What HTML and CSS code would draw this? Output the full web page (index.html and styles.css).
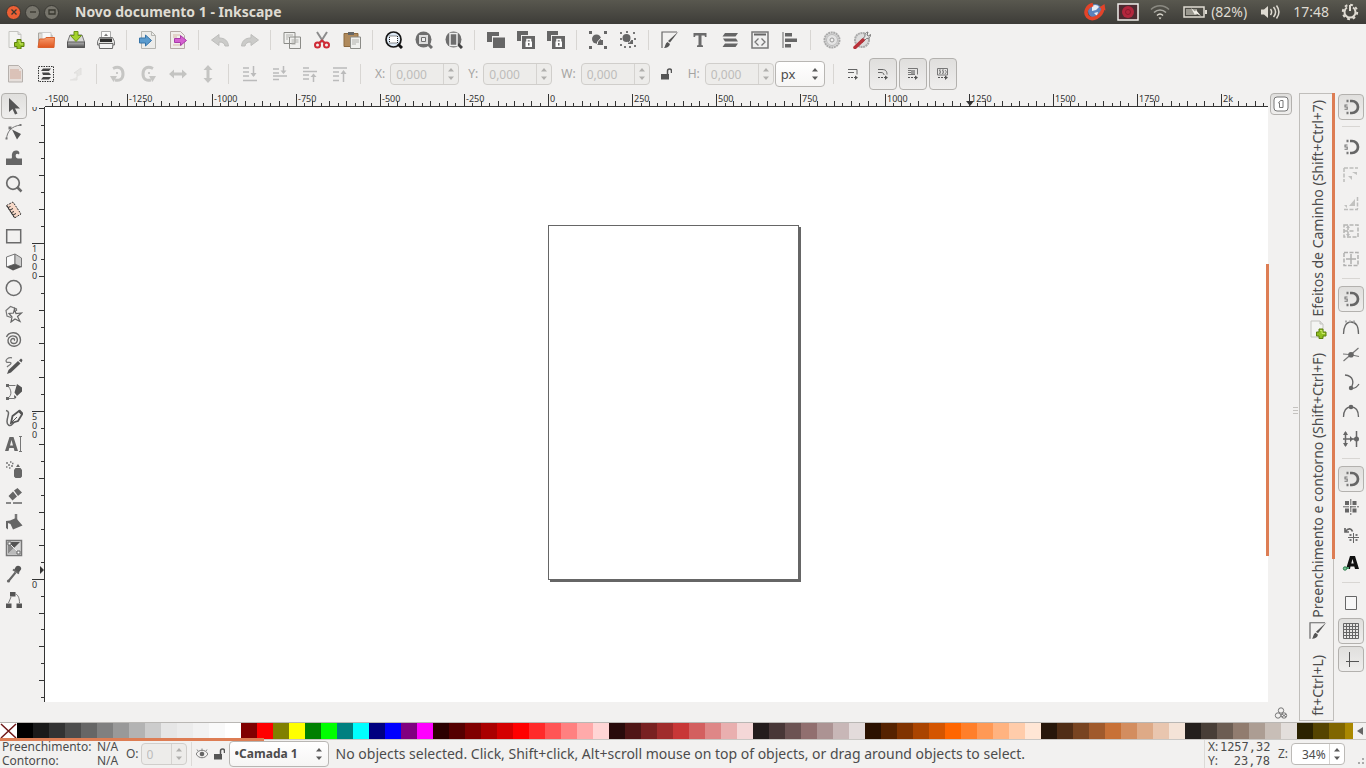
FILE: index.html
```html
<!DOCTYPE html>
<html lang="pt-BR">
<head>
<meta charset="utf-8">
<title>Novo documento 1 - Inkscape</title>
<link rel="stylesheet" href="styles.css">
</head>
<body>
<svg class="defs" aria-hidden="true">
  <defs>
    <linearGradient id="g-orange" x1="0" y1="0" x2="0" y2="1"><stop offset="0" stop-color="#f79a6b"/><stop offset="1" stop-color="#e0561f"/></linearGradient>
    <linearGradient id="g-metal" x1="0" y1="0" x2="0" y2="1"><stop offset="0" stop-color="#b9b9b9"/><stop offset="1" stop-color="#4c4c4c"/></linearGradient>
  </defs>
  <symbol id="spin" viewBox="0 0 8 14"><path d="M1 4.500 4 1l3 3.500zM1 9.500 4 13l3-3.500z"/></symbol>
  <symbol id="new" viewBox="0 0 18 18"><path d="M2 .5h9l3 3v13H2z" fill="#f4f4f2" stroke="#c4c4c0"/><path d="M11 .5v3h3" fill="#ddd" stroke="#c4c4c0"/><path d="M10 8.500h4v3h3v4h-3v2.500h-4v-2.500H7.500v-4H10z" fill="#8fbf1f" stroke="#5d7f10"/><path d="M11 10h2v3h3" fill="none" stroke="#cbe86b"/></symbol>
  <symbol id="open" viewBox="0 0 18 18"><path d="M1.500 16V2h5l1.500 2h7v12z" fill="#dcdad6" stroke="#a9a6a0"/><path d="M5 1.500h9V9H5z" fill="#f8f8f8" stroke="#ccc"/><path d="M1 16.500 2.500 8h5l1.500-1.500h8.500l-.5 10z" fill="url(#g-orange)" stroke="#d9602c"/></symbol>
  <symbol id="save" viewBox="0 0 18 18"><path d="M.5 11 3 4h12l2.500 7v5.500H.5z" fill="#d8d8d6" stroke="#777"/><path d="M.5 11h17v5.500H.5z" fill="url(#g-metal)" stroke="#555"/><path d="M7 .5h4v4h3.500L9 10.500 3.500 4.500H7z" fill="#a5d32c" stroke="#6b9416"/></symbol>
  <symbol id="print" viewBox="0 0 18 18"><path d="M4.500.5h9V9h-9z" fill="#fbfbfb" stroke="#aaa"/><path d="M7 5h4L9 2.500z" fill="#777"/><path d="M2.500 6.500h13l2 4v3.500H.5v-3.500z" fill="#e2e2e0" stroke="#777"/><path d="M3 7.500h12V11H3z" fill="#2e2e2e"/><path d="M2 12.500h14l-.5 5h-13z" fill="#f3f3f3" stroke="#666"/></symbol>
  <symbol id="import" viewBox="0 0 18 18"><path d="M2.500.5h10l4 4v13h-14z" fill="#ececea" stroke="#b5b5b0"/><path d="M12.500.5v4h4" fill="none" stroke="#b5b5b0"/><path d="M.5 7h6V4l6 5.500-6 5.500v-3H.5z" fill="#5a9bce" stroke="#3674a8"/></symbol>
  <symbol id="export" viewBox="0 0 18 18"><path d="M1.500.5h10l4 4v13h-14z" fill="#f0eeea" stroke="#b5a9a5"/><path d="M4 4h7M4 6h4M4 14h9" stroke="#d5b7a7"/><path d="M5.500 7.500h6V4.500l6 5-6 5v-3h-6z" fill="#d45fd0" stroke="#a93ba8"/></symbol>
  <symbol id="undo" viewBox="0 0 18 18"><path d="M.5 9 8 3.500V7c6 0 9 3 9.500 8h-3.500c-.5-3-2.500-4-6-4v3.500z" fill="#cbcbc9" stroke="#bdbdbb"/></symbol>
  <symbol id="copy" viewBox="0 0 18 18"><path d="M1 1.500h11v11H1zM6.500 6h11v11.500h-11z" fill="#f0f0ee" stroke="#8c8c88"/><path d="M3 4h7M3 6h3M3 8h2M8.500 9h7M8.500 11h7M8.500 13h4" stroke="#b0b0ac"/></symbol>
  <symbol id="cut" viewBox="0 0 18 18"><path d="M4 1l7 11M14 1 7 12" stroke="#8c8c8c" stroke-width="2" fill="none"/><circle cx="4.500" cy="14" r="2.500" fill="none" stroke="#cf2b36" stroke-width="2"/><circle cx="13.500" cy="14" r="2.500" fill="none" stroke="#cf2b36" stroke-width="2"/><path d="M6 12l3-2.500 3 2.500" stroke="#cf2b36" stroke-width="2" fill="none"/></symbol>
  <symbol id="paste" viewBox="0 0 18 18"><path d="M1 2.500h14v13H1z" fill="#b08a5c" stroke="#8c6a40"/><path d="M5 1h6v3H5z" fill="#666"/><path d="M7.500 6h10v11.500h-10z" fill="#f0f0ee" stroke="#8c8c88"/><path d="M9 9h7M9 11h7M9 13h4" stroke="#b0b0ac"/></symbol>
  <symbol id="zsel" viewBox="0 0 18 18"><circle cx="8.500" cy="8.500" r="7.500" fill="#dce8f4" stroke="#151515" stroke-width="1.700"/><path d="M13 13l4 4" stroke="#111" stroke-width="3"/><path d="M4.500 5h8v7h-8z" fill="#fff" stroke="#222" stroke-dasharray="1 1"/></symbol>
  <symbol id="zdraw" viewBox="0 0 18 18"><circle cx="8.500" cy="8.500" r="8" fill="#6e6e6e"/><path d="M13 13l4 4" stroke="#6e6e6e" stroke-width="3"/><path d="M4 4h9v9H4z" fill="#ddd"/><path d="M6.500 6.500h4v4h-4z" fill="#eee" stroke="#6e6e6e"/></symbol>
  <symbol id="zpage" viewBox="0 0 18 18"><circle cx="8.500" cy="8.500" r="8" fill="#6e6e6e"/><path d="M13 13l4 4" stroke="#444" stroke-width="3"/><path d="M5 2.500h7v12H5z" fill="#6e6e6e" stroke="#eee" stroke-width="1.500"/></symbol>
  <symbol id="dup" viewBox="0 0 18 18"><path d="M0 1h12v4H5v6H0zM6 6.500h12V17H6z" fill="#666"/></symbol>
  <symbol id="clone" viewBox="0 0 18 18"><path d="M0 0h11v4H4v6H0z" fill="#666"/><path d="M5 5h13v13H5z" fill="#666"/><path d="M8.500 10.500h6.500v5.500H8.500z" fill="#fff"/><path d="M10 11V8.500h3.500V11" fill="none" stroke="#fff" stroke-width="1.500"/><path d="M11 12h1.500v2.500H11z" fill="#666"/></symbol>
  <symbol id="group" viewBox="0 0 18 18"><path d="M0 0h3v3H0zM15 0h3v3h-3zM0 15h3v3H0zM15 15h3v3h-3z" fill="#666"/><circle cx="7.500" cy="8" r="4.500" fill="#666"/><path d="M9 9h5v5H9l-1.500-1.500z" fill="#666"/><path d="M8.500 13V11l3.500-4" stroke="#f2f1f0" fill="none"/></symbol>
  <symbol id="ungroup" viewBox="0 0 18 18"><path d="M1 1h2v2H1zM7 0h2v2H7zM14 1h2v2h-2zM1 7h2v2H1zM1 13h2v2H1zM5 15h2v2H5zM10 15h2v2h-2zM15 14h2v2h-2zM15 7h2v2h-2z" fill="#777"/><circle cx="7.500" cy="7" r="4" fill="#666"/><path d="M9 9h5v4H9z" fill="#666"/><path d="M9.500 12 12 9" stroke="#eee"/></symbol>
  <symbol id="fill" viewBox="0 0 18 18"><path d="M1 17V1h15" fill="none" stroke="#666" stroke-width="1.200"/><path d="M17.500.5 9 11.500l-2-1.500z" fill="#555"/><path d="M6.500 11 9 13c-.5 2.500-3 4-6 4 1.500-1.500 1-4.500 3.500-6z" fill="#555"/></symbol>
  <symbol id="text" viewBox="0 0 18 18"><path d="M2.500 2h13v4h-1.500l-.5-1.500h-3V14l1.500.5V16h-6v-1.500l1.500-.5V4.500h-3L4 6H2.500z" fill="#6b6b6b"/></symbol>
  <symbol id="layers" viewBox="0 0 18 18"><path d="M4 2h13l-2.500 3.500H1.500zM2 7.500h13l2 3H4zM4 12.500h13L14.500 16H1.500z" fill="#666"/></symbol>
  <symbol id="xml" viewBox="0 0 18 18"><path d="M1 1h16v16H1z" fill="#f0f0f0" stroke="#777" stroke-width="1.500"/><path d="M3 3.500h12" stroke="#666" stroke-width="2"/><path d="M7.500 7.500 4 11l3.500 3.500M10.500 7.500 14 11l-3.500 3.500" fill="none" stroke="#777" stroke-width="1.300"/></symbol>
  <symbol id="align" viewBox="0 0 18 18"><path d="M2 1v16" stroke="#666"/><path d="M4 2h7v3.500H4zM4 7.500h12V11H4zM4 13h6v3.500H4z" fill="#666"/></symbol>
  <symbol id="gear" viewBox="0 0 18 18"><circle cx="9" cy="9" r="7.500" fill="#ddd" stroke="#aaa" stroke-width="2" stroke-dasharray="2 .6"/><circle cx="9" cy="9" r="5.500" fill="#e4e4e4" stroke="#bbb"/><circle cx="9" cy="9" r="2" fill="#f2f1f0" stroke="#999"/></symbol>
  <symbol id="prefs" viewBox="0 0 18 18"><circle cx="9" cy="9" r="7" fill="#ddd" stroke="#aaa" stroke-width="2" stroke-dasharray="2 .6"/><path d="M7 10 12 5.500c-.5-2.500.5-4 3-4.500l-1 3 1.500 1 2-1.500c0 3-1.500 4-4 4L9 12z" fill="#e6e6e6" stroke="#777"/><path d="M2 16.500 10 9" stroke="#b8323a" stroke-width="3.500" stroke-linecap="round"/></symbol>

  <symbol id="selall" viewBox="0 0 18 18"><path d="M1.500.5h10l4 4v12.500h-14z" fill="#e6dfdb" stroke="#b5b0ac"/><path d="M3 5h9M3 7h11M3 9h11M3 11h11M3 13h11" stroke="#cfa595"/></symbol>
  <symbol id="sellay" viewBox="0 0 18 18"><path d="M1.500 1.500h15v15h-15z" fill="none" stroke="#333" stroke-dasharray="1.500 1"/><path d="M6 3.500h8l-2 2.500H4zM5 7.500h7l2 2.500H6zM6 12h8l-2 2.500H4z" fill="#444"/></symbol>
  <symbol id="desel" viewBox="0 0 18 18"><path d="M3 15h7V8H7l7-5v7" fill="#e6e5e3" stroke="#e0dfdd"/></symbol>
  <symbol id="rot" viewBox="0 0 18 18"><path d="M4 3.500c6-3 10 0 10 5.500s-4 7-8 6" fill="none" stroke="#c6c6c4" stroke-width="3"/><path d="M1 11h7l-3.500 6z" fill="#c6c6c4"/><circle cx="8" cy="8" r="1" fill="#bbb"/></symbol>
  <symbol id="fliph" viewBox="0 0 18 18"><path d="M0 9l5-4.500V7.500h8V4.500L18 9l-5 4.500v-3H5v3z" fill="#c4c4c2"/></symbol>
  <symbol id="lower" viewBox="0 0 18 18"><path d="M2 3h6M2 7h6M2 11h6M2 15.500h14M12.500 1v10" stroke="#bbb" stroke-width="1.500"/><path d="M9.500 8h6l-3 4z" fill="#bbb"/></symbol>
  <symbol id="lower1" viewBox="0 0 18 18"><path d="M2 4h6M2 8h6M2 11h14M2 14.500h6M12.500 1v6" stroke="#bbb" stroke-width="1.500"/><path d="M9.500 5.500h6l-3 3.500z" fill="#bbb"/></symbol>
  <symbol id="raise1" viewBox="0 0 18 18"><path d="M2 3h6M2 6.500h14M2 10h6M2 14h6M12.500 11v6" stroke="#bbb" stroke-width="1.500"/><path d="M9.500 12h6l-3-3.500z" fill="#bbb"/></symbol>
  <symbol id="raise" viewBox="0 0 18 18"><path d="M2 3h14M2 7h6M2 11h6M2 15.500h6M12.500 7v10" stroke="#bbb" stroke-width="1.500"/><path d="M9.500 9h6l-3-4z" fill="#bbb"/></symbol>
  <symbol id="lock" viewBox="0 0 12 12"><path d="M1 6h8v5.500H1z" fill="#555"/><path d="M7.500 6V3a2 2 0 0 1 4 0v2" fill="none" stroke="#555" stroke-width="1.500"/></symbol>
  <symbol id="aff1" viewBox="0 0 14 14"><path d="M2 2.500h9v5M2 5.500h6" fill="none" stroke="#666"/><path d="M2 10.500h8" stroke="#555" stroke-dasharray="2 1"/><path d="M9 8.500l3 2-3 2.500z" fill="#555"/></symbol>
  <symbol id="aff2" viewBox="0 0 14 14"><path d="M2 2.500h4c4 0 5 2 5 5M2 5.500h3c2 0 3 1 3 2.500" fill="none" stroke="#666"/><path d="M2 10.500h8" stroke="#555" stroke-dasharray="2 1"/><path d="M9 8.500l3 2-3 2.500z" fill="#555"/></symbol>
  <symbol id="aff3" viewBox="0 0 14 14"><path d="M2 1.500h9.500v6M2 3.500h7M2 5.500h7M2 7.500h7" fill="none" stroke="#777"/><path d="M5 3h4v4H5z" fill="#999"/><path d="M2 10.500h8" stroke="#555" stroke-dasharray="2 1"/><path d="M9 8.500l3 2-3 2.500z" fill="#555"/></symbol>
  <symbol id="aff4" viewBox="0 0 14 14"><path d="M1.500 1.500h10v6.500h-10z" fill="none" stroke="#777"/><path d="M3 3l2 2-2 2M6 3l2 2-2 2M9 3l1.500 2L9 7M4 2v5M7 2v5" fill="none" stroke="#888"/><path d="M2 10.500h8" stroke="#555" stroke-dasharray="2 1"/><path d="M9 8.500l3 2-3 2.500z" fill="#555"/></symbol>

  <symbol id="t-sel" viewBox="0 0 18 18"><path d="M4 1v14l3.500-3L10 17.500l2.500-1-2.500-5h5z" fill="#555"/></symbol>
  <symbol id="t-node" viewBox="0 0 18 18"><path d="M1.500 16C2 9 6 3 16 2" fill="none" stroke="#777"/><path d="M14.500 1h2v2h-2zM.5 14.500h2v2h-2zM3.500 3.500h3V6.500h-3z" fill="#777"/><path d="M7 6.500 16 11l-4 5.500z" fill="#555"/></symbol>
  <symbol id="t-tweak" viewBox="0 0 18 18"><path d="M1 9.500h5.500c1-1.500 0-3 .5-4.500C7.500 2 10 1 12 1.500c2 .5 3 2 2 4-1.500-1.500-3.500-1-3.300 1.500.1 1.500 1 2.500 2.300 2.500h4V16H1z" fill="#666"/></symbol>
  <symbol id="t-zoom" viewBox="0 0 18 18"><circle cx="8" cy="8" r="6.300" fill="none" stroke="#6b6b6b" stroke-width="1.700"/><path d="M12 12l4.500 4.500" stroke="#6b6b6b" stroke-width="2.500"/></symbol>
  <symbol id="t-meas" viewBox="0 0 18 18"><path d="M1.500 4.500 8 1l8 12-6.500 4z" fill="#f8d9c8" stroke="#333" stroke-dasharray="2 1"/><path d="M2 5l7.500 11.500M3 6.500l2.500-1M5 9l3-1.500M6.500 11.500l2.500-1M8 14l3-1.500" stroke="#333" fill="none"/></symbol>
  <symbol id="t-rect" viewBox="0 0 18 18"><path d="M1.700 2.700h14v13h-14z" fill="none" stroke="#6b6b6b" stroke-width="1.500"/></symbol>
  <symbol id="t-cube" viewBox="0 0 18 18"><path d="M1.500 4 10 1v10l-8.500 3z" fill="#fafafa" stroke="#777"/><path d="M10 1l6.500 4v9L10 11z" fill="#ccc" stroke="#777"/><path d="M1.500 14 10 11l6.500 3L8 17.500z" fill="#555"/></symbol>
  <symbol id="t-circ" viewBox="0 0 18 18"><circle cx="8.700" cy="9" r="7.500" fill="none" stroke="#6b6b6b" stroke-width="1.500"/></symbol>
  <symbol id="t-star" viewBox="0 0 18 18"><path d="M6 12.500 2 11 1 5.500 5.500 1.500l6 2.500v2" fill="none" stroke="#777" stroke-width="1.200"/><path d="M9.500 4l1.500 4.500 5.500-.5-4 3.500 2.500 5-5-2.500-4 3 1-5L4 8.500l4.500-.5z" fill="#f2f1f0" stroke="#666" stroke-width="1.200"/></symbol>
  <symbol id="t-spiral" viewBox="0 0 18 18"><path d="M9 9.500c1-.5.5-2-1-2-2 0-2.500 2-2 3.500 1 2 4 2 5.500.500 1.500-2 1-5-1-6C7 4 3.500 5.500 3 9c-.5 4 3 6.500 6.500 6.300 3.500-.3 6-3 6-6.300 0-4-3-7.500-7.500-7.200C5 2 2.500 3.500 1.500 6" fill="none" stroke="#6b6b6b" stroke-width="1.400"/></symbol>
  <symbol id="t-pencil" viewBox="0 0 18 18"><path d="M7 .8C3 0 0 3 1.500 5c1 1 4-.5 4.500 1 .5 1.500-2.500 2.500-4 4" fill="none" stroke="#777" stroke-width="1.200"/><path d="M2 17l1.500-4L13 4l2.500 2.500L6 15.500z" fill="#555"/><path d="M14 3.500 16 1.500l1.500 1.500-1 2.500z" fill="#555"/></symbol>
  <symbol id="t-bez" viewBox="0 0 18 18"><path d="M2.500 2.500h8M2.500 2.500C6 6 8 12 2.500 15.500H9" fill="none" stroke="#777"/><path d="M1 1h3v3H1zM1 14h3v3H1z" fill="#666"/><path d="M12 1l5 3.500v4L12 13 9.500 9.500zM9 12l2.500 2-2 2.500z" fill="#555"/></symbol>
  <symbol id="t-call" viewBox="0 0 18 18"><path d="M1 1.500c5 1 1 6 1 11 0 4 3 5 5 3l2-2" fill="none" stroke="#666" stroke-width="1.500"/><path d="M6 14l1.500-7L14 2l3 3.500L13 12z" fill="none" stroke="#555" stroke-width="1.800"/><path d="M7 13l5-5" stroke="#555"/><path d="M14 1.500 17.500 5" stroke="#555" stroke-width="2.500"/></symbol>
  <symbol id="t-text" viewBox="0 0 18 18"><path d="M0 16 4.500 2h4L13 16H9.500l-.8-3H4.300l-.8 3zM5 10.500h3L6.500 5z" fill="#666"/><path d="M14 1.500h3M14 16.500h3M15.500 1.500v15" stroke="#777"/></symbol>
  <symbol id="t-spray" viewBox="0 0 18 18"><path d="M9 9l1.500-2h5L17 9v6.500l-1.500 1.500h-5L9 15.500zM11 6l2-3 2 3z" fill="#666"/><path d="M1 2h2M5 1h1.500M3 4h2M6 5h2M1 6h1.500M4 7h1.500M7 2.500h1.500" stroke="#777" stroke-width="1.500"/></symbol>
  <symbol id="t-erase" viewBox="0 0 18 18"><path d="M9 3.500 12.500 1 17 5.500 13 9zM8 4.500l4 5-4.500 4L3.500 9z" fill="#666"/><path d="M1 16h5M8 16h9" stroke="#666" stroke-width="1.300"/></symbol>
  <symbol id="t-bucket" viewBox="0 0 18 18"><path d="M11 1v8" stroke="#777" stroke-width="2.500"/><path d="M5 7.500 11 5l6.500 7.500L8 16.500 5.500 11 3 10v6.500L1 15V8z" fill="#666"/></symbol>
  <symbol id="t-grad" viewBox="0 0 18 18"><path d="M1.500 1.500h15v15h-15z" fill="#ddd" stroke="#777" stroke-width="1.500"/><path d="M3 3v12L9 9z" fill="#888"/><path d="M3 3h12L9 9z" fill="#555"/><path d="M3 15h12L9 9z" fill="#bbb"/><path d="M3 3l12 12" stroke="#eee"/><path d="M3 3h3v3H3zM12 12h3v3h-3z" fill="#fff" stroke="#666"/></symbol>
  <symbol id="t-drop" viewBox="0 0 18 18"><path d="M11 1.500c2.500-2 6 .5 5 3l-2.500 3.500L9 5z" fill="#555"/><path d="M8 4.500l6 4M10.500 7.500 4 15.500" stroke="#666" stroke-width="2"/><circle cx="3.500" cy="16" r="1.600" fill="#666"/></symbol>
  <symbol id="t-conn" viewBox="0 0 18 18"><path d="M5 1h5.500v4.500H5zM1 12.500h5.500V17H1zM11.500 12.500H17V17h-5.500z" fill="#555"/><path d="M6 6 3.500 12M10.500 3c3 1 4 5 4 9" fill="none" stroke="#777"/></symbol>

  <symbol id="snap" viewBox="0 0 18 18"><path d="M8 3h2a6 6 0 0 1 0 12H8" fill="none" stroke="#666" stroke-width="2.700"/><path d="M4.500 1.700h2v2.600h-2zM4.500 13.700h2v2.600h-2z" fill="#777"/><path d="M5.500 7H3v2h2.200v2.200H2.500" fill="none" stroke="#777" stroke-width="1.100"/></symbol>
  <symbol id="s-bb" viewBox="0 0 18 18"><path d="M2 2h14M2 2v14" stroke="#bdbdbb" stroke-width="1.500" stroke-dasharray="4 1.500"/><path d="M10 6h5v3zM6 10h4v4z" fill="#c2c2c0"/></symbol>
  <symbol id="s-edge" viewBox="0 0 18 18"><path d="M2 15.500h14M15.500 3v12" stroke="#bdbdbb" stroke-width="1.500" stroke-dasharray="4 1.500"/><path d="M7 12h6V5zM2 11h3v3z" fill="#c2c2c0"/></symbol>
  <symbol id="s-mid" viewBox="0 0 18 18"><path d="M2 3h14v12H2zM2 9h11M6 4v10" fill="none" stroke="#b5b5b3" stroke-width="1.500" stroke-dasharray="4 1.500"/><path d="M4 6l2-3 2 3zM4 12l2 3 2-3z" fill="#bbb"/></symbol>
  <symbol id="s-cen" viewBox="0 0 18 18"><path d="M2 2.500h14v13H2z" fill="none" stroke="#b0b0ae" stroke-width="1.500" stroke-dasharray="4 1.500"/><path d="M9 4v10M4 9h10" stroke="#b0b0ae" stroke-width="1.500"/></symbol>
  <symbol id="s-node" viewBox="0 0 18 18"><path d="M1.500 16C1.500 9 4 4 9 4s7.500 5 7.500 12" fill="none" stroke="#666" stroke-width="1.300"/><path d="M3 3.500h12" stroke="#aaa" stroke-width="2" stroke-dasharray="2 2"/></symbol>
  <symbol id="s-path" viewBox="0 0 18 18"><path d="M1.500 15 16.500 2M1 8c6 0 10 1 16 2.500" fill="none" stroke="#777" stroke-width="1.200"/><circle cx="9" cy="8.700" r="2.800" fill="#666"/></symbol>
  <symbol id="s-cusp" viewBox="0 0 18 18"><path d="M3 1c9 1 9 8 6 13 3 1 6-1 8-4" fill="none" stroke="#666" stroke-width="1.300"/><circle cx="9" cy="14" r="2.200" fill="#666"/></symbol>
  <symbol id="s-smooth" viewBox="0 0 18 18"><path d="M1.500 15C1.500 9 4 5 9 5s7.500 4 7.500 10" fill="none" stroke="#666" stroke-width="1.300"/><circle cx="9" cy="5" r="2.300" fill="#666"/></symbol>
  <symbol id="s-line" viewBox="0 0 18 18"><path d="M3.500 2v14M1 9h15M14.500 1v16" stroke="#666" stroke-width="1.500"/><path d="M1 5l2.500-4L6 5zM1 13l2.500 4L6 13zM8 6l3 3-3 3z" fill="#666"/><circle cx="14.500" cy="9" r="2.500" fill="#666"/></symbol>
  <symbol id="s-obj" viewBox="0 0 18 18"><path d="M3 3h4v4H3zM10.500 3h4v4h-4zM3 10.500h4v4H3zM10.500 10.500h4v4h-4z" fill="#666"/><path d="M8.800 1v16M1 8.800h16" stroke="#666" stroke-dasharray="6 1"/></symbol>
  <symbol id="s-rot" viewBox="0 0 18 18"><path d="M3 2v4h4M3.500 5.500c3-4 6-3 7 0" fill="none" stroke="#666" stroke-width="1.700"/><path d="M6 11.500h11M11.500 7v10" stroke="#666"/><path d="M7.500 8h2v2h-2zM13.500 8h2v2h-2zM7.500 13h2v2h-2zM13.500 13h2v2h-2z" fill="#777"/></symbol>
  <symbol id="s-text" viewBox="0 0 18 18"><path d="M4 15 8 2h5l4 13h-4l-.7-2.500H8.500L8 15zM9.300 9.500h2.400L10.500 5z" fill="#111"/><path d="M2 14h5" stroke="#4b9b6b" stroke-width="2"/><circle cx="3" cy="14.500" r="1.700" fill="#7dc79a" stroke="#2c7a4b"/></symbol>
  <symbol id="s-page" viewBox="0 0 18 18"><path d="M3.500 2.500h11v13h-11z" fill="#f7f7f7" stroke="#666"/></symbol>
  <symbol id="s-grid" viewBox="0 0 18 18"><path d="M1.500 1.500h15v15h-15zM4.500 1v16M7.500 1v16M10.500 1v16M13.500 1v16M1 4.500h16M1 7.500h16M1 10.500h16M1 13.500h16" fill="none" stroke="#666"/></symbol>
  <symbol id="s-guide" viewBox="0 0 18 18"><path d="M7.500 2v15M4 11.500h13" stroke="#555"/></symbol>
</svg>

<header class="titlebar">
  <div class="wm">
    <button class="wm-btn wm-close" aria-label="Fechar"><svg viewBox="0 0 14 14"><path d="M4.500 4.500l5 5M9.500 4.500l-5 5"/></svg></button>
    <button class="wm-btn" aria-label="Minimizar"><svg viewBox="0 0 14 14"><path d="M4 7h6"/></svg></button>
    <button class="wm-btn" aria-label="Maximizar"><svg viewBox="0 0 14 14"><path d="M4 5h6v4H4z"/></svg></button>
  </div>
  <h1>Novo documento 1 - Inkscape</h1>
  <div class="tray">
    <svg class="tray-globe" viewBox="0 0 22 20"><circle cx="11" cy="9" r="7" fill="#5c83bd"/><path d="M8 4c3-2 6-1 7 1l-3 3-4 1zM10 11l4-1-1 4z" fill="#e6edf5"/><path d="M9 2.500C3 4 0 10 3.500 14.500c5 5 14 0 15.500-8" fill="none" stroke="#e2442a" stroke-width="3.500"/><path d="M15 5.500 20.500 2l1 6.500z" fill="#e2442a"/></svg>
    <svg class="tray-rec" viewBox="0 0 22 18"><path d="M1 1h20v16H1z" fill="#4c2a30" stroke="#f0eeea" stroke-width="1.500"/><circle cx="11" cy="9" r="6" fill="#b3263d"/><circle cx="11" cy="9" r="2.500" fill="none" stroke="#8d1a2e"/></svg>
    <svg class="tray-wifi" viewBox="0 0 20 16"><path d="M1 5.500c5-5 13-5 18 0" stroke="#8b8a82"/><path d="M4 8.500c3.500-3.500 8.500-3.500 12 0" stroke="#aaa9a2"/><path d="M7 11.500c2-2 4-2 6 0" stroke="#dfdbd2"/><path d="M8.500 13.500h3L10 15.500z" fill="#dfdbd2"/></svg>
    <svg class="tray-bat" viewBox="0 0 24 14"><path d="M1 2h20v10H1z" fill="none" stroke="#dfdbd2" stroke-width="1.500"/><path d="M22 5h2v4h-2z" fill="#dfdbd2"/><path d="M3 4h11v6H3z" fill="#9a988f"/><path d="M8 3l4 3.500 1-1.500 5 6-5-2.500-1 1.500z" fill="#f2efe8"/></svg>
    <span class="tray-pct">(82%)</span>
    <svg class="tray-vol" viewBox="0 0 20 16"><path d="M1 5.500h3L8 2v12l-4-3.500H1z" fill="#dfdbd2"/><path d="M10.500 5c1.500 2 1.500 4 0 6M13.500 3c2.500 3 2.500 7 0 10M16.500 1.500c3 4 3 9 0 13" fill="none" stroke="#dfdbd2" stroke-width="1.500"/></svg>
    <span class="tray-time">17:48</span>
    <svg class="tray-pow" viewBox="0 0 18 18"><circle cx="9" cy="9" r="7.200" fill="none" stroke="#dfdbd2" stroke-width="2" stroke-dasharray="2.800 2.850"/><path d="M6 4.500a5.500 5.500 0 1 0 6 0M9 2v6" fill="none" stroke="#dfdbd2" stroke-width="2"/></svg>
  </div>
</header>

<nav class="bar commands" aria-label="Comandos">
  <button aria-label="Novo"><svg><use href="#new"/></svg></button>
  <button aria-label="Abrir"><svg><use href="#open"/></svg></button>
  <button aria-label="Salvar"><svg><use href="#save"/></svg></button>
  <button aria-label="Imprimir"><svg><use href="#print"/></svg></button>
  <i class="sep"></i>
  <button aria-label="Importar"><svg><use href="#import"/></svg></button>
  <button aria-label="Exportar"><svg><use href="#export"/></svg></button>
  <i class="sep"></i>
  <button aria-label="Desfazer"><svg><use href="#undo"/></svg></button>
  <button aria-label="Refazer"><svg class="mirror"><use href="#undo"/></svg></button>
  <i class="sep"></i>
  <button aria-label="Copiar"><svg><use href="#copy"/></svg></button>
  <button aria-label="Recortar"><svg><use href="#cut"/></svg></button>
  <button aria-label="Colar"><svg><use href="#paste"/></svg></button>
  <i class="sep"></i>
  <button aria-label="Ajustar seleção"><svg><use href="#zsel"/></svg></button>
  <button aria-label="Ajustar desenho"><svg><use href="#zdraw"/></svg></button>
  <button aria-label="Ajustar página"><svg><use href="#zpage"/></svg></button>
  <i class="sep"></i>
  <button aria-label="Duplicar"><svg><use href="#dup"/></svg></button>
  <button aria-label="Clonar"><svg><use href="#clone"/></svg></button>
  <button aria-label="Desligar clone"><svg><use href="#clone"/></svg></button>
  <i class="sep"></i>
  <button aria-label="Agrupar"><svg><use href="#group"/></svg></button>
  <button aria-label="Desagrupar"><svg><use href="#ungroup"/></svg></button>
  <i class="sep"></i>
  <button aria-label="Preenchimento e contorno"><svg><use href="#fill"/></svg></button>
  <button aria-label="Texto e fonte"><svg><use href="#text"/></svg></button>
  <button aria-label="Camadas"><svg><use href="#layers"/></svg></button>
  <button aria-label="Editor XML"><svg><use href="#xml"/></svg></button>
  <button aria-label="Alinhar"><svg><use href="#align"/></svg></button>
  <i class="sep"></i>
  <button aria-label="Preferências"><svg><use href="#gear"/></svg></button>
  <button aria-label="Propriedades do documento"><svg><use href="#prefs"/></svg></button>
</nav>

<div class="bar options">
  <button aria-label="Selecionar tudo"><svg><use href="#selall"/></svg></button>
  <button aria-label="Selecionar em todas as camadas"><svg><use href="#sellay"/></svg></button>
  <button aria-label="Desfazer seleção"><svg><use href="#desel"/></svg></button>
  <i class="sep"></i>
  <button aria-label="Girar à esquerda"><svg><use href="#rot"/></svg></button>
  <button aria-label="Girar à direita"><svg class="mirror"><use href="#rot"/></svg></button>
  <button aria-label="Inverter horizontalmente"><svg><use href="#fliph"/></svg></button>
  <button aria-label="Inverter verticalmente"><svg class="quarter"><use href="#fliph"/></svg></button>
  <i class="sep"></i>
  <button aria-label="Mover para o fundo"><svg><use href="#lower"/></svg></button>
  <button aria-label="Abaixar"><svg><use href="#lower1"/></svg></button>
  <button aria-label="Elevar"><svg><use href="#raise1"/></svg></button>
  <button aria-label="Mover para o topo"><svg><use href="#raise"/></svg></button>
  <i class="sep"></i>
  <div class="coords">
    <label for="cx">X:</label><span class="spin off"><input id="cx" value="0,000" disabled><svg><use href="#spin"/></svg></span>
    <label for="cy">Y:</label><span class="spin off"><input id="cy" value="0,000" disabled><svg><use href="#spin"/></svg></span>
    <label for="cw">W:</label><span class="spin off"><input id="cw" value="0,000" disabled><svg><use href="#spin"/></svg></span>
    <button class="mini" aria-label="Travar proporção"><svg><use href="#lock"/></svg></button>
    <label for="ch">H:</label><span class="spin off"><input id="ch" value="0,000" disabled><svg><use href="#spin"/></svg></span>
  </div>
  <span class="combo unit"><select aria-label="Unidade"><option>px</option></select><svg><use href="#spin"/></svg></span>
  <i class="sep"></i>
  <button class="aff" aria-label="Escalar contorno"><svg><use href="#aff1"/></svg></button>
  <button class="aff on" aria-label="Escalar cantos"><svg><use href="#aff2"/></svg></button>
  <button class="aff on" aria-label="Mover gradientes"><svg><use href="#aff3"/></svg></button>
  <button class="aff on" aria-label="Mover padrões"><svg><use href="#aff4"/></svg></button>
</div>

<main class="work">
  <nav class="tools" aria-label="Ferramentas">
    <button class="on" aria-label="Seleção"><svg><use href="#t-sel"/></svg></button>
    <button aria-label="Nós"><svg><use href="#t-node"/></svg></button>
    <button aria-label="Ajuste"><svg><use href="#t-tweak"/></svg></button>
    <button aria-label="Zoom"><svg><use href="#t-zoom"/></svg></button>
    <button aria-label="Medição"><svg><use href="#t-meas"/></svg></button>
    <button aria-label="Retângulo"><svg><use href="#t-rect"/></svg></button>
    <button aria-label="Caixa 3D"><svg><use href="#t-cube"/></svg></button>
    <button aria-label="Elipse"><svg><use href="#t-circ"/></svg></button>
    <button aria-label="Estrela"><svg><use href="#t-star"/></svg></button>
    <button aria-label="Espiral"><svg><use href="#t-spiral"/></svg></button>
    <button aria-label="Lápis"><svg><use href="#t-pencil"/></svg></button>
    <button aria-label="Bézier"><svg><use href="#t-bez"/></svg></button>
    <button aria-label="Caligrafia"><svg><use href="#t-call"/></svg></button>
    <button aria-label="Texto"><svg><use href="#t-text"/></svg></button>
    <button aria-label="Spray"><svg><use href="#t-spray"/></svg></button>
    <button aria-label="Borracha"><svg><use href="#t-erase"/></svg></button>
    <button aria-label="Balde"><svg><use href="#t-bucket"/></svg></button>
    <button aria-label="Gradiente"><svg><use href="#t-grad"/></svg></button>
    <button aria-label="Conta-gotas"><svg><use href="#t-drop"/></svg></button>
    <button aria-label="Conector"><svg><use href="#t-conn"/></svg></button>
  </nav>
  <svg class="ruler-v" id="rv"></svg>
  <div class="desk">
    <svg class="ruler-h" id="rh"></svg>
    <div class="canvas"><div class="page"></div><i class="thumb-v"></i></div>
    <div class="desk-foot"></div>
  </div>
  <div class="gutter">
    <button class="on guide" aria-label="Guias"><svg viewBox="0 0 18 18"><rect x="2" y="2" width="14" height="14" rx="3" fill="#fff" stroke="#777"/><path d="M7.500 12.500V8H6.500l2-2.500H11v7z" fill="#fff" stroke="#777"/></svg></button>
    <i class="grip"></i>
    <svg class="cms" viewBox="0 0 14 14"><circle cx="7" cy="4.500" r="2.700"/><circle cx="4" cy="9.500" r="2.700"/><circle cx="10" cy="9.500" r="2.700"/><path d="M8 8l4 3M12 8l-4 3"/></svg>
  </div>
  <aside class="dock">
    <button class="tab"><svg><use href="#new"/></svg>Efeitos de Caminho (Shift+Ctrl+7)</button>
    <button class="tab"><svg><use href="#fill"/></svg>Preenchimento e contorno (Shift+Ctrl+F)</button>
    <button class="tab">ft+Ctrl+L)</button>
  </aside>
  <nav class="snaps" aria-label="Encaixe">
    <i class="thumb-d"></i>
    <button class="on" aria-label="Ativar encaixe"><svg><use href="#snap"/></svg></button>
    <i class="hsep"></i>
    <button aria-label="Caixas"><svg><use href="#snap"/></svg></button>
    <button aria-label="Bordas"><svg><use href="#s-bb"/></svg></button>
    <button aria-label="Cantos"><svg><use href="#s-edge"/></svg></button>
    <button aria-label="Pontos médios"><svg><use href="#s-mid"/></svg></button>
    <button aria-label="Centros"><svg><use href="#s-cen"/></svg></button>
    <i class="hsep"></i>
    <button class="on" aria-label="Nós"><svg><use href="#snap"/></svg></button>
    <button aria-label="Caminhos"><svg><use href="#s-node"/></svg></button>
    <button aria-label="Interseções"><svg><use href="#s-path"/></svg></button>
    <button aria-label="Nós de canto"><svg><use href="#s-cusp"/></svg></button>
    <button aria-label="Nós suaves"><svg><use href="#s-smooth"/></svg></button>
    <button aria-label="Meio de linha"><svg><use href="#s-line"/></svg></button>
    <i class="hsep"></i>
    <button class="on" aria-label="Outros"><svg><use href="#snap"/></svg></button>
    <button aria-label="Centro de objetos"><svg><use href="#s-obj"/></svg></button>
    <button aria-label="Centro de rotação"><svg><use href="#s-rot"/></svg></button>
    <button aria-label="Linha de base"><svg><use href="#s-text"/></svg></button>
    <i class="hsep"></i>
    <button aria-label="Borda da página"><svg><use href="#s-page"/></svg></button>
    <button class="on" aria-label="Grades"><svg><use href="#s-grid"/></svg></button>
    <button class="on" aria-label="Linhas-guia"><svg><use href="#s-guide"/></svg></button>
  </nav>
</main>

<div class="palette">
  <button class="none" aria-label="Nenhuma"><svg viewBox="0 0 17 16"><path d="M1 1l15 14M16 1 1 15"/></svg></button>
  <div class="swatches" id="sw"></div>
  <button class="pal-menu" aria-label="Paletas"><svg viewBox="0 0 6 8"><path d="M6 0v8L0 4z"/></svg></button>
  <i class="thumb-p"></i>
</div>

<footer class="status">
  <div class="style-ind"><span>Preenchimento:</span><span>N/A</span><span>Contorno:</span><span>N/A</span></div>
  <label for="op">O:</label>
  <span class="spin off opacity"><input id="op" value="0" disabled><svg><use href="#spin"/></svg></span>
  <i class="vsep"></i>
  <button class="eye" aria-label="Visibilidade"><svg viewBox="0 0 12 12"><path d="M0 6c3-5 9-5 12 0-3 5-9 5-12 0z" fill="none" stroke="#777"/><circle cx="6" cy="6" r="2.300" fill="#666"/><path d="M2 3 1 1.500M6 2V.5M10 3l1-1.500" stroke="#888"/></svg></button>
  <button class="mini" aria-label="Travar camada"><svg><use href="#lock"/></svg></button>
  <span class="combo layer"><select aria-label="Camada"><option>•Camada 1</option></select><svg><use href="#spin"/></svg></span>
  <p class="msg">No objects selected. Click, Shift+click, Alt+scroll mouse on top of objects, or drag around objects to select.</p>
  <div class="xy"><span>X:</span><b>1257,32</b><span>Y:</span><b>23,78</b></div>
  <label for="zm">Z:</label>
  <span class="spin zoom"><input id="zm" value="34%"><svg><use href="#spin"/></svg></span>
  <i class="corner"></i>
</footer>
<script src="app.js"></script>
</body>
</html>
```
FILE: styles.css
```css
* { box-sizing: border-box; }
html, body { height: 100%; }
body {
  margin: 0;
  display: flex;
  flex-direction: column;
  overflow: hidden;
  background: #f2f1f0;
  color: #4c4c4c;
  font: 13px/16px "Noto Sans", "Open Sans", sans-serif;
}
button {
  display: flex;
  align-items: center;
  justify-content: center;
  flex: none;
  padding: 0;
  border: 1px solid transparent;
  border-radius: 4px;
  background: none;
  color: inherit;
  font: inherit;
}
button svg { width: 18px; height: 18px; flex: none; }
button.on {
  border-color: #b3b1ae;
  background: linear-gradient(#e0dfdd, #efeeed);
}
.defs { position: absolute; width: 0; height: 0; }
.mirror { transform: scaleX(-1); }
.quarter { transform: rotate(90deg); }

.titlebar {
  display: flex;
  align-items: center;
  flex: none;
  height: 24px;
  padding: 0 7px 0 6px;
  background: linear-gradient(#59584f, #3d3c38);
  color: #dfdbd2;
}
.wm { display: flex; gap: 4px; width: 69px; }
.wm-btn {
  width: 15px;
  height: 15px;
  border: 1px solid #3a3934;
  border-radius: 50%;
  background: #77756c;
}
.wm-close { background: #ec5f34; }
.wm-btn svg { width: 14px; height: 14px; fill: none; stroke: #38372f; stroke-width: 1.300; }
.titlebar h1 { margin: 0; font-size: 14px; line-height: 24px; font-weight: 700; }
.tray { display: flex; align-items: center; margin-left: auto; font-size: 14px; line-height: 24px; }
.tray svg { flex: none; }
.tray-globe { width: 22px; height: 20px; margin-right: 11px; }
.tray-rec { width: 22px; height: 18px; margin-right: 11px; }
.tray-wifi { width: 20px; height: 16px; margin-right: 13px; fill: none; stroke-width: 1.500; }
.tray-bat { width: 24px; height: 14px; margin-right: 4px; }
.tray-pct { margin-right: 13px; }
.tray-vol { width: 20px; height: 16px; margin-right: 13px; }
.tray-time { margin-right: 12px; }
.tray-pow { width: 18px; height: 18px; }

.bar { display: flex; align-items: center; flex: none; padding-left: 1px; }
.bar > button { width: 30px; height: 30px; }
.commands { height: 32px; }
.options { height: 37px; padding-bottom: 1px; }
.sep { flex: none; width: 12px; height: 20px; }
.sep::before { content: ""; display: block; width: 1px; height: 100%; margin-left: 5px; background: #d8d6d3; }

.coords { display: flex; align-items: center; padding-left: 8px; color: #a5a4a2; font-size: 12px; }
.coords label { margin-right: 5px; }
.coords .spin { margin-right: 9px; }
.coords .mini { margin-right: 15px; }
.coords .spin:last-child { margin-right: 1px; }
.mini { width: 14px; height: 20px; }
.mini svg { width: 12px; height: 12px; }

.spin {
  display: flex;
  align-items: center;
  flex: none;
  width: 69px;
  height: 22px;
  border: 1px solid #bcbab7;
  border-radius: 4px;
  background: #fff;
}
.spin input {
  flex: 1;
  min-width: 0;
  height: 100%;
  padding: 0 0 0 5px;
  border: 0;
  border-right: 1px solid #d5d3d0;
  background: none;
  color: #4c4c4c;
  font: 12px/16px "Noto Sans", "Open Sans", sans-serif;
}
.spin svg, .combo svg { width: 8px; height: 14px; fill: #5a5a5a; }
.spin svg { margin: 0 3px; }
.spin.off { border-color: #d0cecb; background: #edecea; }
.spin.off input { color: #bdbcba; }
.spin.off svg { fill: #b0afad; }

.combo { position: relative; display: flex; flex: none; height: 26px; }
.combo select {
  appearance: none;
  width: 100%;
  height: 100%;
  padding: 0 5px;
  border: 1px solid #b8b6b3;
  border-radius: 4px;
  background: linear-gradient(#fff, #f6f5f4);
  color: #4c4c4c;
  font: 13px/16px "Noto Sans", "Open Sans", sans-serif;
}
.combo svg { position: absolute; right: 6px; top: 6px; pointer-events: none; }
.unit { width: 50px; margin-right: 3px; }
.options > .aff { width: 28px; height: 32px; margin-right: 2px; }
.options > .aff:not(.on) { margin: 0 2px 0 -1px; }
.aff svg { width: 14px; height: 14px; }

.work {
  display: grid;
  grid-template-columns: 28px 17px minmax(0, 1fr) 31px 35px 32px;
  grid-template-rows: minmax(0, 1fr);
  flex: 1;
  min-height: 0;
}
.tools { display: flex; flex-direction: column; padding-left: 1px; }
.tools button { width: 26px; height: 26px; }
.ruler-v { width: 17px; height: calc(100% - 34px); margin-top: 14px; overflow: hidden; }
.desk { display: flex; flex-direction: column; min-width: 0; }
.ruler-h { flex: none; width: 100%; height: 14px; }
.ruler-h text, .ruler-v text { font: 9px "Noto Sans", "Open Sans", sans-serif; fill: #333; }
.tick { fill: #333; }
.canvas { position: relative; flex: 1; background: #fff; }
.page {
  position: absolute;
  left: 503px;
  top: 118px;
  width: 251px;
  height: 355px;
  border: 1px solid #666;
  box-shadow: 2px 2px 0 #666;
  background: #fff;
}
.thumb-v { position: absolute; right: -1px; top: 157px; width: 3px; height: 292px; background: #dd7d54; }
.desk-foot { flex: none; height: 20px; }

.gutter { display: flex; flex-direction: column; align-items: flex-start; justify-content: space-between; padding: 0 0 2px 2px; }
.guide { width: 22px; height: 22px; }
.grip { align-self: flex-end; width: 5px; height: 8px; margin-right: 1px; background: repeating-linear-gradient(#c4c2bf 0 1px, transparent 1px 3px); }
.cms { width: 14px; height: 14px; margin-left: 4px; fill: none; stroke: #777; }

.dock {
  display: flex;
  flex-direction: column;
  align-items: center;
  gap: 14px;
  min-height: 0;
  overflow: hidden;
  margin-bottom: 1px;
  padding: 6px 0 0 3px;
  border: 1px solid #c0bebb;
}
.tab {
  writing-mode: vertical-rl;
  transform: rotate(180deg);
  justify-content: flex-start;
  gap: 3px;
  border: 0;
  white-space: nowrap;
  font-size: 14px;
  line-height: 20px;
}
.tab svg { width: 18px; height: 20px; transform: rotate(180deg); }

.snaps { position: relative; display: flex; flex-direction: column; padding-left: 4px; }
.thumb-d { position: absolute; left: -2px; top: 0; width: 3px; height: 466px; background: #dd7d54; }
.snaps button { width: 26px; height: 26px; margin: 1px 0; }
.hsep { flex: none; width: 18px; height: 12px; margin-left: 4px; background: linear-gradient(#d8d6d3, #d8d6d3) 0 5px / 100% 1px no-repeat; }

.palette { position: relative; display: flex; align-items: stretch; flex: none; height: 18px; border-top: 1px solid #b9b7b4; border-bottom: 1px solid #c9c7c4; }
.none { width: 17px; border: 0; border-radius: 0; background: #fff; }
.none svg { width: 17px; height: 16px; fill: none; stroke: #701818; stroke-width: 1.500; }
.swatches { display: flex; flex: 1; min-width: 0; overflow: hidden; }
.swatches button { width: 16px; border: 0; border-radius: 0; }
.pal-menu { width: 13px; }
.pal-menu svg { width: 6px; height: 8px; fill: #666; }
.thumb-p { position: absolute; left: 0; bottom: -2px; width: 264px; height: 3px; background: #dd7d54; }

.status { display: flex; align-items: center; flex: none; height: 28px; padding-left: 2px; font-size: 12px; }
.style-ind { display: grid; grid-template-columns: 95px 29px; line-height: 14px; flex: none; }
.opacity { width: 46px; margin-left: 2px; }
.vsep { width: 1px; height: 24px; margin: 0 4px; background: #dcdad7; }
.eye { width: 12px; height: 20px; }
.eye svg { width: 12px; height: 12px; }
.status .mini { margin: 0 3px 0 4px; }
.layer { width: 100px; }
.layer select { font-size: 12px; font-weight: 700; }
.msg { flex: 1; min-width: 0; margin: 0 0 0 7px; overflow: hidden; white-space: nowrap; font-size: 14px; line-height: 20px; }
.xy {
  display: grid;
  grid-template-columns: 12px 50px;
  flex: none;
  margin-right: 8px;
  padding-left: 3px;
  border-left: 1px solid #dcdad7;
  line-height: 14px;
}
.xy b { font: 12px/14px "DejaVu Sans Mono", monospace; text-align: right; }
.zoom { width: 54px; margin-left: 3px; }
.zoom input { padding-left: 10px; }
.corner { width: 12px; height: 12px; margin: 12px 0 0 9px; background: radial-gradient(circle at 1px 1px, #aaa 1px, transparent 1px) 0 0 / 4px 4px; clip-path: polygon(100% 0, 100% 100%, 0 100%); }
```
FILE: app.js
```js
const NS = 'http://www.w3.org/2000/svg';
const SCALE = 0.3365;

function add(parent, name, attrs, text) {
  const el = document.createElementNS(NS, name);
  for (const key in attrs) el.setAttribute(key, attrs[key]);
  if (text !== undefined) el.textContent = text;
  parent.appendChild(el);
  return el;
}

function drawHorizontal(svg, origin) {
  const width = svg.clientWidth;
  add(svg, 'rect', { class: 'tick', x: 0, y: 13, width: width, height: 1 });
  for (let u = -1500; origin + u * SCALE < width; u += 25) {
    const x = Math.round(origin + u * SCALE);
    const major = u % 250 === 0;
    const h = major ? 12 : u % 50 === 0 ? 5 : 3;
    add(svg, 'rect', { class: 'tick', x: x, y: 13 - h, width: 1, height: h });
    if (major) add(svg, 'text', { x: x + 2, y: 9 }, u === 2000 ? '2k' : u);
  }
  add(svg, 'path', { class: 'tick', d: 'M921 8h8l-4 5z' });
}

function drawVertical(svg, origin) {
  const height = svg.clientHeight;
  add(svg, 'rect', { class: 'tick', x: 16, y: 0, width: 1, height: height });
  for (let u = 1400; origin - u * SCALE < height; u -= 50) {
    const y = Math.round(origin - u * SCALE);
    const major = u % 500 === 0;
    const w = major ? 12 : u % 100 === 0 ? 5 : 3;
    add(svg, 'rect', { class: 'tick', x: 16 - w, y: y, width: w, height: 1 });
    if (major && u >= 0) {
      const label = add(svg, 'text', {});
      String(u).split('').forEach((c, i) => add(label, 'tspan', { x: 4, y: y + 9 + i * 9 }, c));
    }
  }
  add(svg, 'text', { x: 4, y: 4 }, '0');
  add(svg, 'path', { class: 'tick', d: 'M12 459v8l4-4z' });
}

drawHorizontal(document.getElementById('rh'), 503);
drawVertical(document.getElementById('rv'), 472);

const colours = `000000 1a1a1a 333333 4d4d4d 666666 808080 999999 b3b3b3 cccccc e6e6e6 ececec f2f2f2 f9f9f9 ffffff
800000 ff0000 808000 ffff00 008000 00ff00 008080 00ffff 000080 0000ff 800080 ff00ff
2b0000 550000 800000 aa0000 d40000 ff0000 ff2a2a ff5555 ff8080 ffaaaa ffd5d5
280b0b 501616 782121 a02c2c c83737 d35f5f de8787 e9afaf f4d7d7
241c1c 483737 6c5353 916f6f ac9393 c8b7b7 e3dbdb
2b1100 552200 803300 aa4400 d45500 ff6600 ff7f2a ff9955 ffb380 ffccaa ffe6d5
28170b 502d16 784421 a05a2c c87137 d38d5f deaa87 e9c6af f4e3d7
241f1c 483e37 6c5d53 917c6f ac9d93 c8beb7 e3dedb
2b2200 554400 806600 aa8800`.split(/\s+/);
const box = document.getElementById('sw');
for (const c of colours) {
  const b = document.createElement('button');
  b.style.background = '#' + c;
  b.setAttribute('aria-label', '#' + c);
  box.appendChild(b);
}
```
